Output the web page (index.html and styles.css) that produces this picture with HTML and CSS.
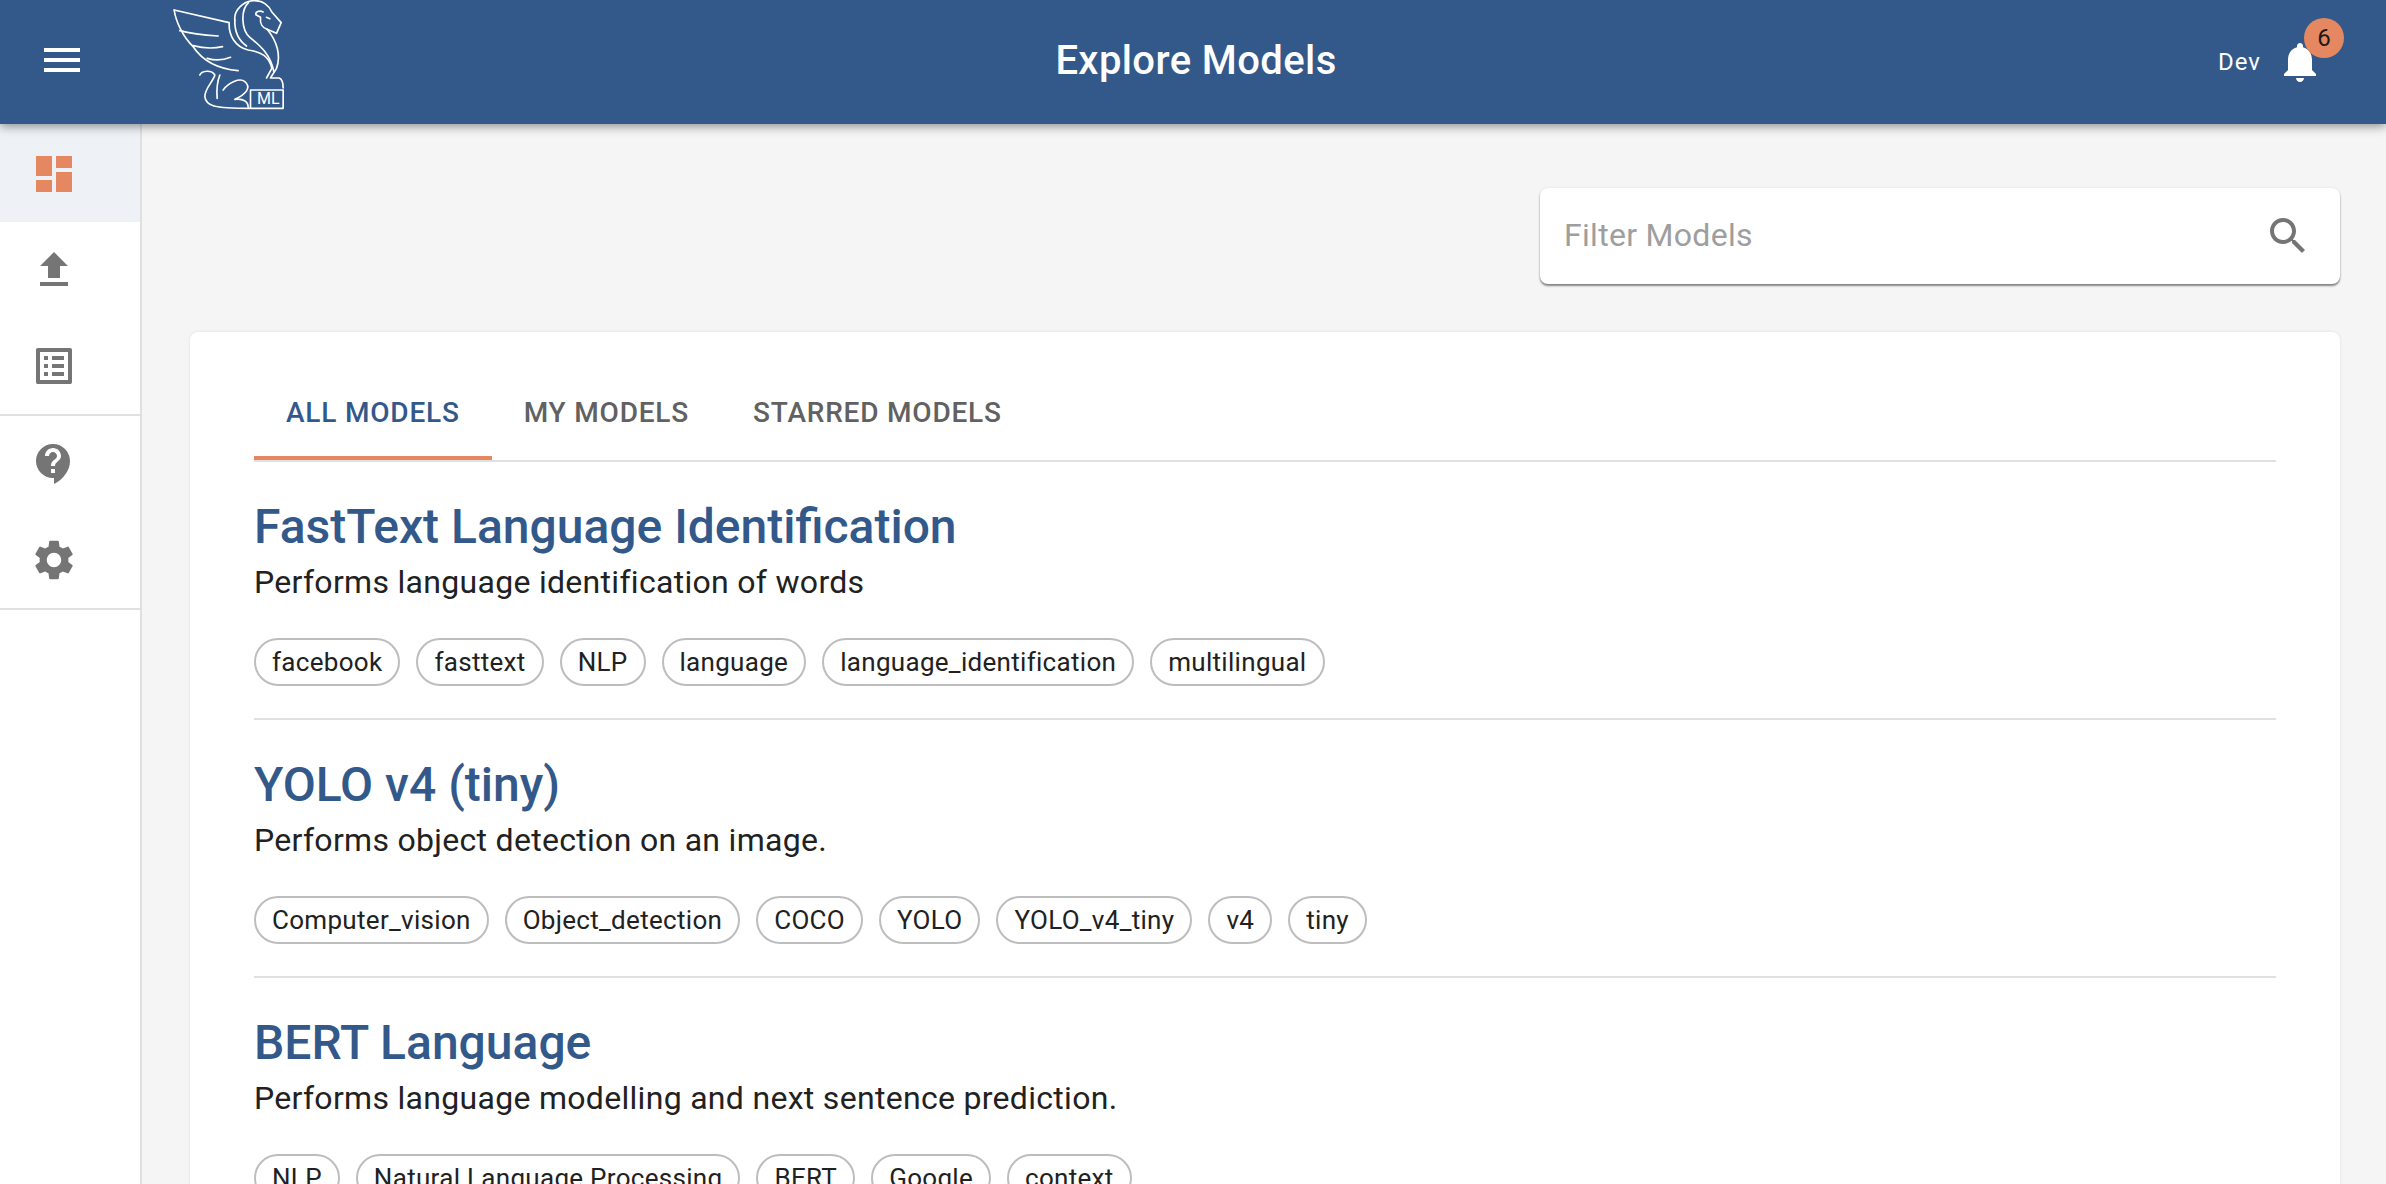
FILE: index.html
```html
<!DOCTYPE html>
<html lang="en">
<head>
    <meta charset="UTF-8">
    <title>Explore Models</title>
    <link rel="stylesheet" href="styles.css">
</head>
<body>
    <div class="page">
        <header class="topbar">
            <div class="topbar-left">
                <svg class="icon menu-icon" viewBox="0 0 24 24"><path d="M3 18h18v-2H3v2zm0-5h18v-2H3v2zm0-5h18V6H3v2z"/></svg>
                <!-- logo traced from the reference -->
                <svg class="logo" viewBox="70 0 335 330" fill="none" stroke="#fff" stroke-width="5" stroke-linecap="round" stroke-linejoin="round">
                    <path d="M73 30L238 68C236 105 255 140 295 150C335 155 358 170 366 205L350 234"/>
                    <path d="M73 30C78 65 100 112 130 140C150 170 190 205 265 212"/>
                    <path d="M90 92C125 102 170 106 205 108"/>
                    <path d="M130 137C160 145 195 145 218 140"/>
                    <path d="M172 175C195 182 222 180 242 172"/>
                    <path d="M255 60C252 30 280 4 310 2C340 0 358 18 366 36L394 68L380 100L352 88"/>
                    <path d="M255 60C254 90 262 118 290 138"/>
                    <path d="M296 8C272 30 274 90 300 112C335 140 362 165 372 215"/>
                    <path d="M340 36C328 30 316 36 318 44L332 52C330 70 338 84 352 88C380 122 395 165 380 205L362 234H388C398 238 400 250 400 264"/>
                    <path d="M350 52L360 56"/>
                    <path d="M150 225C155 212 185 208 195 225C190 245 165 265 165 290C168 318 190 325 300 325"/>
                    <path d="M210 225C202 245 200 270 202 295"/>
                    <path d="M220 270C235 248 270 232 285 245C305 262 290 282 255 298C280 294 295 305 295 322"/>
                    <path d="M302 270H400V325H302Z"/>
                </svg>
                <span class="logo-tag">ML</span>
            </div>
            <h1 class="topbar-title">Explore Models</h1>
            <div class="topbar-right">
                <span class="user-name">Dev</span>
                <div class="bell">
                    <svg class="icon bell-icon" viewBox="0 0 24 24"><path d="M12 22c1.1 0 2-.9 2-2h-4c0 1.1.89 2 2 2zm6-6v-5c0-3.07-1.64-5.64-4.5-6.32V4c0-.83-.67-1.5-1.5-1.5s-1.5.67-1.5 1.5v.68C7.63 5.36 6 7.92 6 11v5l-2 2v1h16v-1l-2-2z"/></svg>
                    <span class="badge">6</span>
                </div>
            </div>
        </header>
        <div class="layout">
            <nav class="sidebar">
                <div class="side-group">
                    <div class="side-item first active"><svg class="icon" viewBox="0 0 24 24"><path d="M3 13h8V3H3v10zm0 8h8v-6H3v6zm10 0h8V11h-8v10zm0-18v6h8V3h-8z"/></svg></div>
                    <div class="side-item"><svg class="icon" viewBox="0 0 24 24"><path d="M9 16h6v-6h4l-7-7-7 7h4zm-4 2h14v2H5z"/></svg></div>
                    <div class="side-item"><svg class="icon" viewBox="0 0 24 24"><path d="M19 5v14H5V5h14m1.1-2H3.9c-.5 0-.9.4-.9.9v16.2c0 .4.4.9.9.9h16.2c.4 0 .9-.5.9-.9V3.9c0-.5-.5-.9-.9-.9zM11 7h6v2h-6V7zm0 4h6v2h-6v-2zm0 4h6v2h-6zM7 7h2v2H7zm0 4h2v2H7zm0 4h2v2H7z"/></svg></div>
                </div>
                <div class="side-group">
                    <div class="side-item"><svg class="icon" viewBox="0 0 24 24"><path d="M11.5 2C6.81 2 3 5.81 3 10.5S6.81 19 11.5 19h.5v3c4.86-2.34 8-7 8-11.5C20 5.81 16.19 2 11.5 2zm1 14.5h-2v-2h2v2zm0-3.5h-2c0-3.25 3-3 3-5 0-1.1-.9-2-2-2s-2 .9-2 2h-2c0-2.21 1.79-4 4-4s4 1.79 4 4c0 2.5-3 2.75-3 5z"/></svg></div>
                    <div class="side-item"><svg class="icon" viewBox="0 0 24 24"><path d="M19.14 12.94c.04-.3.06-.61.06-.94 0-.32-.02-.64-.07-.94l2.03-1.58c.18-.14.23-.41.12-.61l-1.92-3.32c-.12-.22-.37-.29-.59-.22l-2.39.96c-.5-.38-1.03-.7-1.62-.94l-.36-2.54c-.04-.24-.24-.41-.48-.41h-3.84c-.24 0-.43.17-.47.41l-.36 2.54c-.59.24-1.13.57-1.62.94l-2.39-.96c-.22-.08-.47 0-.59.22L2.74 8.87c-.12.21-.08.47.12.61l2.03 1.58c-.05.3-.09.63-.09.94s.02.64.07.94l-2.03 1.58c-.18.14-.23.41-.12.61l1.92 3.32c.12.22.37.29.59.22l2.39-.96c.5.38 1.03.7 1.62.94l.36 2.54c.05.24.24.41.48.41h3.84c.24 0 .44-.17.47-.41l.36-2.54c.59-.24 1.13-.56 1.62-.94l2.39.96c.22.08.47 0 .59-.22l1.92-3.32c.12-.22.07-.47-.12-.61l-2.01-1.58zM12 15.6c-1.98 0-3.6-1.62-3.6-3.6s1.62-3.6 3.6-3.6 3.6 1.62 3.6 3.6-1.62 3.6-3.6 3.6z"/></svg></div>
                </div>
            </nav>
            <main class="content">
                <div class="filter-row">
                    <div class="filter-box">
                        <input class="filter-input" type="text" placeholder="Filter Models">
                        <svg class="icon" viewBox="0 0 24 24"><path d="M15.5 14h-.79l-.28-.27C15.41 12.59 16 11.11 16 9.5 16 5.91 13.09 3 9.5 3S3 5.91 3 9.5 5.91 16 9.5 16c1.61 0 3.09-.59 4.23-1.57l.27.28v.79l5 4.99L20.49 19l-4.99-5zm-6 0C7.01 14 5 11.99 5 9.5S7.01 5 9.5 5 14 7.01 14 9.5 11.99 14 9.5 14z"/></svg>
                    </div>
                </div>
                <section class="card">
                    <div class="tabs">
                        <div class="tab selected">ALL MODELS</div>
                        <div class="tab">MY MODELS</div>
                        <div class="tab">STARRED MODELS</div>
                    </div>
                    <article class="model">
                        <h2 class="model-title">FastText Language Identification</h2>
                        <p class="model-desc">Performs language identification of words</p>
                        <div class="chips">
                            <span class="chip">facebook</span>
                            <span class="chip">fasttext</span>
                            <span class="chip">NLP</span>
                            <span class="chip">language</span>
                            <span class="chip">language_identification</span>
                            <span class="chip">multilingual</span>
                        </div>
                    </article>
                    <article class="model">
                        <h2 class="model-title">YOLO v4 (tiny)</h2>
                        <p class="model-desc">Performs object detection on an image.</p>
                        <div class="chips">
                            <span class="chip">Computer_vision</span>
                            <span class="chip">Object_detection</span>
                            <span class="chip">COCO</span>
                            <span class="chip">YOLO</span>
                            <span class="chip">YOLO_v4_tiny</span>
                            <span class="chip">v4</span>
                            <span class="chip">tiny</span>
                        </div>
                    </article>
                    <article class="model">
                        <h2 class="model-title">BERT Language</h2>
                        <p class="model-desc">Performs language modelling and next sentence prediction.</p>
                        <div class="chips">
                            <span class="chip">NLP</span>
                            <span class="chip">Natural Language Processing</span>
                            <span class="chip">BERT</span>
                            <span class="chip">Google</span>
                            <span class="chip">context</span>
                        </div>
                    </article>
                </section>
            </main>
        </div>
    </div>
</body>
</html>
```

FILE: styles.css
```css
*{
    margin: 0;
    padding: 0;
    box-sizing: border-box;
}
html,body{
    height: 100%;
    overflow: hidden;
}
body{
    font-family: Roboto, "Liberation Sans", sans-serif;
    background-color: #f5f5f5;
    color: #212121;
}
.page{
    display: flex;
    flex-direction: column;
    height: 100vh;
}
.icon{
    display: block;
    width: 48px;
    height: 48px;
    fill: #757575;
    flex-shrink: 0;
}

/* top bar */
.topbar{
    position: relative;
    z-index: 2;
    display: grid;
    grid-template-columns: 1fr auto 1fr;
    align-items: center;
    flex-shrink: 0;
    height: 124px;
    background-color: #33598b;
    box-shadow: 0 2px 10px rgba(0, 0, 0, 0.45);
    color: #fff;
}
.topbar-left{
    position: relative;
    display: flex;
    align-items: flex-start;
    height: 124px;
    padding-left: 38px;
}
.menu-icon{
    margin-top: 36px;
    fill: #fff;
}
.logo{
    display: block;
    width: 112px;
    height: 110px;
    margin-left: 87px;
}
.logo-tag{
    position: absolute;
    left: 257px;
    top: 90px;
    font-size: 16px;
    line-height: 18px;
    color: #fff;
}
.topbar-title{
    font-size: 40px;
    font-weight: 500;
    line-height: 48px;
    letter-spacing: 0.4px;
    padding: 0 0 2px 6px;
}
.topbar-right{
    display: flex;
    justify-content: flex-end;
    align-items: center;
    padding-right: 62px;
}
.user-name{
    font-size: 24px;
    letter-spacing: 1px;
    margin-right: 15px;
}
.bell{
    position: relative;
    width: 48px;
    height: 48px;
}
.bell-icon{
    fill: #fff;
}
.badge{
    position: absolute;
    left: 28px;
    top: -20px;
    width: 40px;
    height: 40px;
    line-height: 40px;
    border-radius: 50%;
    text-align: center;
    font-size: 24px;
    background-color: #e58760;
    color: #1a1a1a;
}

/* side nav */
.layout{
    display: flex;
    flex: 1;
    min-height: 0;
}
.sidebar{
    width: 142px;
    flex-shrink: 0;
    background-color: #fff;
    border-right: 2px solid #e0e0e0;
}
.side-group{
    border-bottom: 2px solid #e0e0e0;
}
.side-item{
    display: flex;
    align-items: center;
    height: 96px;
    padding-left: 30px;
}
.side-item.first{
    height: 98px;
    padding-top: 2px;
}
.side-item.active{
    background-color: #eef1f6;
}
.side-item.active .icon{
    fill: #e58760;
}

/* main */
.content{
    flex: 1;
    min-width: 0;
    padding: 64px 46px 0 48px;
}
.filter-row{
    display: flex;
    justify-content: flex-end;
    margin-bottom: 48px;
}
.filter-box{
    display: flex;
    align-items: center;
    width: 800px;
    height: 96px;
    padding: 0 28px 0 24px;
    background-color: #fff;
    border-radius: 8px;
    box-shadow: 0 2px 2px rgba(0, 0, 0, 0.45), 0 0 3px rgba(0, 0, 0, 0.08);
}
.filter-input{
    flex: 1;
    min-width: 0;
    height: 40px;
    margin-bottom: 2px;
    border: none;
    outline: none;
    font-family: inherit;
    font-size: 32px;
    letter-spacing: 0.3px;
    background: transparent;
}
.filter-input::placeholder{
    color: #9e9e9e;
    opacity: 1;
}
.card{
    padding: 32px 64px 0;
    background-color: #fff;
    border-radius: 8px;
    box-shadow: 0 0 3px rgba(0, 0, 0, 0.1);
}
.tabs{
    display: flex;
    border-bottom: 2px solid #e0e0e0;
    height: 98px;
}
.tab{
    display: flex;
    align-items: center;
    height: 96px;
    padding: 5px 32px 0;
    font-size: 28px;
    font-weight: 500;
    letter-spacing: 0.8px;
    color: #616161;
    border-bottom: 4px solid transparent;
}
.tab.selected{
    color: #33598b;
    border-bottom-color: #e58760;
}
.model{
    padding: 38px 0 32px;
    border-bottom: 2px solid #e0e0e0;
}
.model-title{
    font-size: 48px;
    font-weight: 500;
    line-height: 54px;
    color: #33598b;
}
.model-desc{
    margin-top: 8px;
    font-size: 32px;
    line-height: 40px;
    letter-spacing: 0.3px;
}
.chips{
    display: flex;
    gap: 16px;
    margin-top: 36px;
}
.chip{
    display: flex;
    align-items: center;
    height: 48px;
    padding: 0 16px;
    border: 2px solid #bdbdbd;
    border-radius: 24px;
    font-size: 26px;
    letter-spacing: 0.3px;
}
```
